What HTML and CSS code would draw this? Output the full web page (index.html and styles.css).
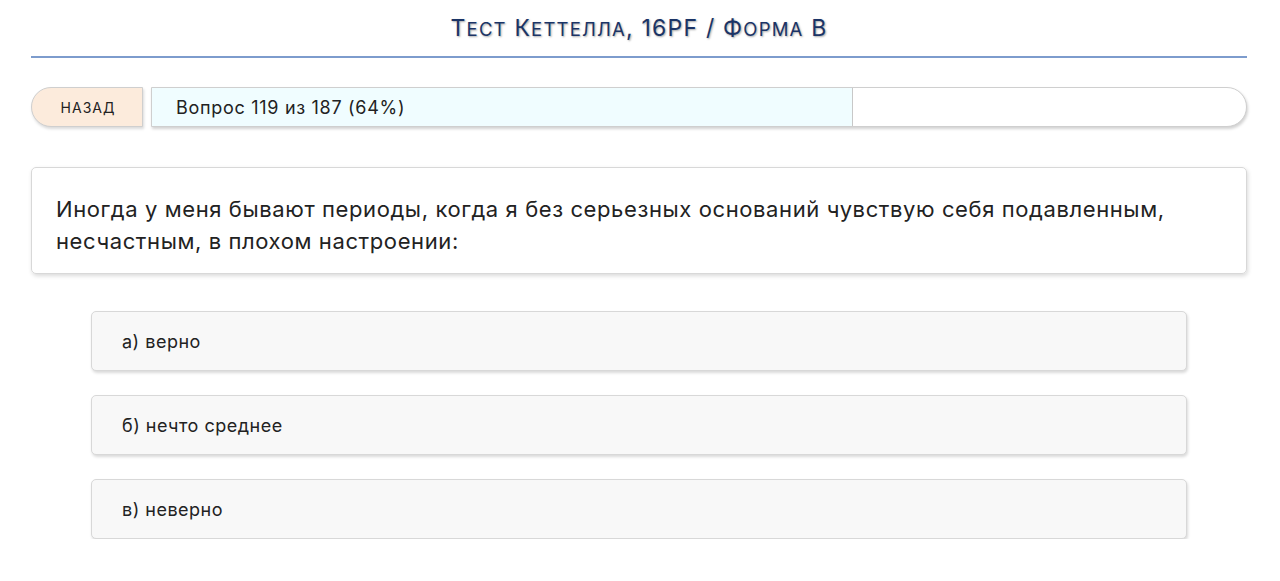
FILE: index.html
```html
<!DOCTYPE html>
<html lang="ru">
<head>
<meta charset="utf-8">
<title>Тест Кеттелла, 16PF / Форма B</title>
<link rel="stylesheet" href="styles.css">
</head>
<body>
<div class="page">
  <h1 class="title"><span class="cap">Т</span><span class="sc">ест</span> <span class="cap">К</span><span class="sc">еттелла</span>, 16PF / <span class="cap">Ф</span><span class="sc">орма</span> B</h1>
  <div class="progress-row">
    <button class="back">НАЗАД</button>
    <div class="bar">
      <div class="fill" style="width: 64%"></div>
      <span class="bar-text">Вопрос 119 из 187 (64%)</span>
    </div>
  </div>
  <div class="question">Иногда у меня бывают периоды, когда я без серьезных оснований чувствую себя подавленным, несчастным, в плохом настроении:</div>
  <div class="answers">
    <div class="answer">а) верно</div>
    <div class="answer">б) нечто среднее</div>
    <div class="answer">в) неверно</div>
  </div>
</div>
</body>
</html>
```

FILE: styles.css
```css
html, body {
  margin: 0;
  padding: 0;
  background: #ffffff;
}
body {
  font-family: Inter, "Liberation Sans", Arial, sans-serif;
  color: #222;
}
.page {
  padding: 0 33px 0 31px;
}
.title {
  margin: 0;
  padding-top: 12px;
  height: 44px;
  box-sizing: content-box;
  text-align: center;
  font-size: 23px;
  font-weight: normal;
  letter-spacing: 1.2px;
  color: #1b3466;
  text-shadow: 1px 1px 2px rgba(0, 0, 0, 0.35);
  line-height: 32px;
  border-bottom: 2px solid #7d9ccd;
}
.title .sc {
  font-size: 18.5px;
  text-transform: uppercase;
}
.progress-row {
  display: flex;
  gap: 8px;
  margin-top: 29px;
  height: 40px;
}
.back {
  width: 112px;
  height: 40px;
  box-sizing: border-box;
  border: 1px solid #cfcfcf;
  border-radius: 20px 0 0 20px;
  background: #fcebdc;
  font-family: Inter, "Liberation Sans", Arial, sans-serif;
  font-size: 14px;
  letter-spacing: 1px;
  color: #222;
  padding: 0 0 0 2px;
  box-shadow: 1px 2px 3px rgba(0, 0, 0, 0.15);
}
.bar {
  flex: 1;
  position: relative;
  height: 40px;
  box-sizing: border-box;
  border: 1px solid #cfcfcf;
  border-radius: 0 20px 20px 0;
  background: #fff;
  box-shadow: 1px 2px 3px rgba(0, 0, 0, 0.18);
  overflow: hidden;
  display: flex;
  align-items: center;
}
.fill {
  position: absolute;
  left: 0;
  top: 0;
  bottom: 0;
  background: #f0fdff;
  border-right: 1px solid #c8c8c8;
}
.bar-text {
  position: relative;
  padding-left: 24px;
  font-size: 18px;
  letter-spacing: 0.7px;
  color: #222;
}
.question {
  margin-top: 40px;
  border: 1px solid #d8d8d8;
  border-radius: 5px;
  box-shadow: 1px 2px 4px rgba(0, 0, 0, 0.15);
  padding: 25px 24px 16px 24px;
  font-size: 22px;
  letter-spacing: 0.6px;
  line-height: 32px;
  color: #222;
}
.answers {
  display: flex;
  flex-direction: column;
  gap: 24px;
  margin: 37px 60px 0 60px;
}
.answer {
  height: 60px;
  box-sizing: border-box;
  background: #f8f8f8;
  border: 1px solid #d8d8d8;
  border-radius: 5px;
  box-shadow: 1px 2px 3px rgba(0, 0, 0, 0.15);
  display: flex;
  align-items: center;
  padding-left: 30px;
  font-size: 18px;
  letter-spacing: 0.5px;
  color: #222;
}
```
